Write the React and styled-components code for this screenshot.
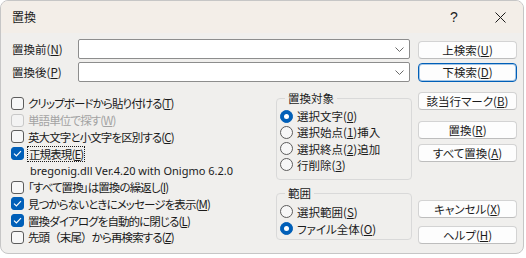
import React from 'react';
import styled, { createGlobalStyle } from 'styled-components';

const GlobalStyle = createGlobalStyle`
  html, body {
    margin: 0;
    padding: 0;
    background: #ffffff;
  }
  body {
    font-family: "Noto Sans CJK JP", "Noto Sans", sans-serif;
    font-size: 11.5px;
    color: #1b1b1b;
  }
`;

const Window = styled.div`
  box-sizing: border-box;
  width: 524px;
  height: 254px;
  border: 1px solid #c6c6c6;
  border-radius: 8px;
  background: #f0efed;
  overflow: hidden;
  display: flex;
  flex-direction: column;
  font-feature-settings: "palt";
`;

const TitleBar = styled.div`
  height: 32px;
  flex: none;
  display: flex;
  align-items: center;
  padding-left: 11px;
  background: #f3eee8;
`;

const Title = styled.span`
  font-size: 12px;
  line-height: 14px;
`;

const TitleButton = styled.div`
  width: 46px;
  height: 32px;
  display: flex;
  align-items: center;
  justify-content: center;
  margin-left: ${p => (p.$first ? 'auto' : '0')};
  font-family: "Liberation Sans", sans-serif;
  font-size: 14px;
  color: #1b1b1b;
`;

const Body = styled.div`
  flex: 1;
  padding: 6px 6px 0 10px;
`;

const TopGrid = styled.div`
  display: grid;
  grid-template-columns: 59px 332px 99px;
  grid-auto-rows: 20px;
  column-gap: 8px;
  row-gap: 3px;
  align-items: center;
`;

const FieldLabel = styled.span`
  padding-left: 1px;
  line-height: 14px;
`;

const Combo = styled.div`
  box-sizing: border-box;
  height: 20px;
  background: #ffffff;
  border: 1px solid #8d8d8d;
  border-radius: 2px;
  display: flex;
  align-items: center;
  justify-content: flex-end;
  padding-right: 5px;
`;

const Button = styled.div`
  box-sizing: border-box;
  height: ${p => p.$h || 18}px;
  margin-top: ${p => p.$mt || 0}px;
  background: #fdfdfd;
  border: 1px solid ${p => (p.$default ? '#005fb8' : '#d3d3d3')};
  border-bottom-color: ${p => (p.$default ? '#005fb8' : '#bdbdbd')};
  box-shadow: ${p => (p.$default ? 'inset 0 0 0 1px rgba(0,95,184,0.35)' : 'none')};
  border-radius: 4px;
  display: flex;
  align-items: center;
  justify-content: center;
  line-height: 14px;
  color: #1b1b1b;
`;

const LowerGrid = styled.div`
  display: grid;
  grid-template-columns: 265px 136px 105px;
  margin-top: 10px;
`;

const CheckList = styled.div`
  display: flex;
  flex-direction: column;
  padding-top: 3px;
`;

const Row = styled.div`
  height: ${p => p.$pitch || 16.75}px;
  display: flex;
  align-items: center;
  gap: 4px;
  color: ${p => (p.$disabled ? '#a3a3a3' : '#1b1b1b')};
  line-height: 14px;
  white-space: nowrap;
  letter-spacing: ${p => (p.$tight ? '-0.9px' : '0')};
`;

const Wide = styled.span`
  font-feature-settings: normal;
`;

const Note = styled.div`
  height: 16.75px;
  display: flex;
  align-items: center;
  padding-left: 19px;
  font-family: "Noto Sans", sans-serif;
  font-size: 11px;
  white-space: nowrap;
`;

const Box = styled.span`
  box-sizing: border-box;
  width: 13px;
  height: 13px;
  flex: none;
  border-radius: 3px;
  border: 1px solid ${p => (p.$checked ? '#005fb8' : p.$disabled ? '#c8c8c8' : '#5c5c5c')};
  background: ${p => (p.$checked ? '#005fb8' : p.$disabled ? '#f3f3f3' : '#f7f7f7')};
  display: flex;
  align-items: center;
  justify-content: center;
`;

const Focus = styled.span`
  outline: 1px dotted #1b1b1b;
  outline-offset: 0px;
  padding: 0 1px;
`;

const GroupColumn = styled.div`
  display: flex;
  flex-direction: column;
`;

const Group = styled.fieldset`
  margin: ${p => p.$mt || 0}px 0 0 0;
  padding: ${p => p.$pad};
  border: 1px solid #d9d9d9;
  border-radius: 4px;
  min-width: 0;
`;

const Legend = styled.legend`
  margin-left: 5px;
  padding: 0 3px;
  line-height: 12px;
`;

const Radio = styled.span`
  box-sizing: border-box;
  width: 13px;
  height: 13px;
  flex: none;
  border-radius: 50%;
  border: 1px solid ${p => (p.$checked ? '#005fb8' : '#5c5c5c')};
  background: ${p => (p.$checked ? '#005fb8' : '#f7f7f7')};
  display: flex;
  align-items: center;
  justify-content: center;
  &::after {
    content: '';
    width: 5px;
    height: 5px;
    border-radius: 50%;
    background: #ffffff;
    display: ${p => (p.$checked ? 'block' : 'none')};
  }
`;

const ButtonColumn = styled.div`
  display: flex;
  flex-direction: column;
  padding-left: 6px;
`;

const Check = () => (
  <svg width="9" height="7" viewBox="0 0 9 7">
    <polyline points="1,3.6 3.4,6 8,1.2" fill="none" stroke="#ffffff" strokeWidth="1.2" />
  </svg>
);

const Chevron = () => (
  <svg width="9" height="5" viewBox="0 0 9 5">
    <polyline points="0.5,0.5 4.5,4.5 8.5,0.5" fill="none" stroke="#6a6a6a" strokeWidth="1" />
  </svg>
);

const CloseIcon = () => (
  <svg width="11" height="11" viewBox="0 0 11 11">
    <path d="M0.5 0.5 L10.5 10.5 M10.5 0.5 L0.5 10.5" stroke="#1b1b1b" strokeWidth="1" />
  </svg>
);

const Key = ({ k }) => <>(<u>{k}</u>)</>;

const checks = [
  { text: 'クリップボードから貼り付ける', k: 'T' },
  { text: '単語単位で探す', k: 'W', disabled: true },
  { text: '英大文字と小文字を区別する', k: 'C' },
  { text: '正規表現', k: 'E', checked: true, focus: true },
  { note: 'bregonig.dll Ver.4.20 with Onigmo 6.2.0' },
  { text: '「すべて置換」は置換の繰返し', k: 'I' },
  { text: '見つからないときにメッセージを表示', k: 'M', checked: true },
  { text: '置換ダイアログを自動的に閉じる', k: 'L', checked: true },
  { text: <>先頭<Wide>（</Wide>末尾<Wide>）</Wide>から再検索する</>, k: 'Z' },
];

const targets = [
  { label: <>選択文字<Key k="0" /></>, checked: true },
  { label: <>選択始点<Key k="1" />挿入</> },
  { label: <>選択終点<Key k="2" />追加</> },
  { label: <>行削除<Key k="3" /></> },
];

const ranges = [
  { label: <>選択範囲<Key k="S" /></> },
  { label: <>ファイル全体<Key k="O" /></>, checked: true },
];

export default function App() {
  return (
    <>
      <GlobalStyle />
      <Window>
        <TitleBar>
          <Title>置換</Title>
          <TitleButton $first>?</TitleButton>
          <TitleButton><CloseIcon /></TitleButton>
        </TitleBar>
        <Body>
          <TopGrid>
            <FieldLabel>置換前<Key k="N" /></FieldLabel>
            <Combo><Chevron /></Combo>
            <Button $mt={2}>上検索<Key k="U" /></Button>
            <FieldLabel>置換後<Key k="P" /></FieldLabel>
            <Combo><Chevron /></Combo>
            <Button $h={19} $default>下検索<Key k="D" /></Button>
          </TopGrid>
          <LowerGrid>
            <CheckList>
              {checks.map((c, i) =>
                c.note ? (
                  <Note key={i}>{c.note}</Note>
                ) : (
                  <Row key={i} $tight $disabled={c.disabled}>
                    <Box $checked={c.checked} $disabled={c.disabled}>
                      {c.checked && <Check />}
                    </Box>
                    {c.focus ? (
                      <Focus>{c.text}<Key k={c.k} /></Focus>
                    ) : (
                      <span>{c.text}<Key k={c.k} /></span>
                    )}
                  </Row>
                )
              )}
            </CheckList>
            <GroupColumn>
              <Group $pad="4px 0 6px 3px">
                <Legend>置換対象</Legend>
                {targets.map((r, i) => (
                  <Row key={i} $pitch={16.25}>
                    <Radio $checked={r.checked} />
                    <span>{r.label}</span>
                  </Row>
                ))}
              </Group>
              <Group $mt={7} $pad="4px 0 2px 3px">
                <Legend>範囲</Legend>
                {ranges.map((r, i) => (
                  <Row key={i} $pitch={17}>
                    <Radio $checked={r.checked} />
                    <span>{r.label}</span>
                  </Row>
                ))}
              </Group>
            </GroupColumn>
            <ButtonColumn>
              <Button>該当行マーク<Key k="B" /></Button>
              <Button $mt={11}>置換<Key k="R" /></Button>
              <Button $mt={5}>すべて置換<Key k="A" /></Button>
              <Button $mt={38}>キャンセル<Key k="X" /></Button>
              <Button $mt={8}>ヘルプ<Key k="H" /></Button>
            </ButtonColumn>
          </LowerGrid>
        </Body>
      </Window>
    </>
  );
}
